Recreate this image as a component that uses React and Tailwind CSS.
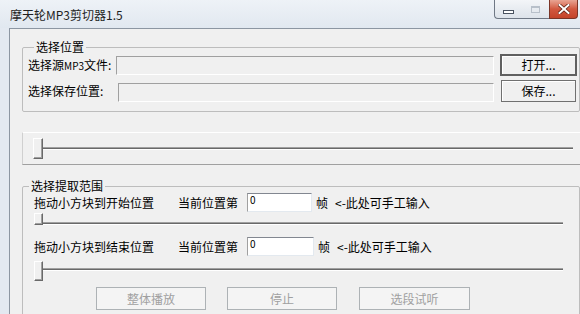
import React from 'react';

const Thumb = ({ className }) => (
    <div className={className}>
        <div className="w-full h-full border border-t-white border-l-white border-r-[#696969] border-b-[#696969] bg-[#f0f0f0] shadow-[inset_-1px_-1px_0_#a0a0a0]" />
    </div>
);

const Track = ({ className }) => (
    <div className={className}>
        <div className="h-[3px] border-t border-t-[#a0a0a0] bg-[#696969] border-b border-b-white" />
    </div>
);

const SunkenField = ({ className }) => (
    <div className={className}>
        <div className="w-full h-full border border-t-[#a0a0a0] border-l-[#a0a0a0] border-r-white border-b-white bg-[#f0f0f0]" />
    </div>
);

const NumInput = ({ className }) => (
    <div className={className}>
        <div className="w-full h-full border border-t-[#828790] border-l-[#a0a0a0] border-r-[#e3e9ef] border-b-[#e3e9ef] bg-white pl-[2px] text-[10px] leading-[11px] text-black">0</div>
    </div>
);

const DisabledButton = ({ children, className }) => (
    <div className={className}>
        <div className="w-full h-full flex items-center justify-center border border-[#adb2b5] bg-[#f4f4f4] text-[#a0a0a0]">{children}</div>
    </div>
);

export default function App() {
    return (
        <div className="w-[580px] h-[314px] overflow-hidden bg-[#e3e9f1] flex flex-col text-[12px] leading-[14px] text-black font-['Noto_Sans_CJK_SC','Liberation_Sans',sans-serif]">
            {/* Title bar */}
            <div className="h-[28px] shrink-0 flex items-start bg-gradient-to-b from-[#eef2f7] to-[#e1e8f0]">
                <div className="pl-[10px] pt-[7px] text-[12px] leading-[16px] text-[#1e1e1e]">摩天轮MP3剪切器1.5</div>
                <div className="ml-auto mr-[2px] flex">
                    <div className="w-[28px] h-[19px] flex items-end justify-center pb-[4px] border border-t-0 border-r-0 border-[#6f7885] rounded-bl-[4px] bg-gradient-to-b from-[#f3f5f8] to-[#dde3ea]">
                        <div className="w-[11px] h-[4px] border border-[#4a5360] bg-white" />
                    </div>
                    <div className="w-[27px] h-[19px] flex items-center justify-center border-b border-[#6f7885] bg-gradient-to-b from-[#f3f5f8] to-[#dde3ea]">
                        <div className="w-[9px] h-[7px] border border-[#b8c0ca] border-t-2" />
                    </div>
                    <div className="w-[29px] h-[19px] flex items-center justify-center border border-t-0 border-[#7a3527] rounded-br-[4px] bg-gradient-to-b from-[#e8a493] via-[#d2583f] to-[#c4442a]">
                        <svg width="12" height="10" viewBox="0 0 12 10">
                            <path d="M1.5 1 L10.5 9 M10.5 1 L1.5 9" stroke="#5a1e12" strokeWidth="3.4" strokeLinecap="square" />
                            <path d="M1.5 1 L10.5 9 M10.5 1 L1.5 9" stroke="#ffffff" strokeWidth="2" strokeLinecap="square" />
                        </svg>
                    </div>
                </div>
            </div>

            {/* Frame + client */}
            <div className="flex-1 flex pl-[9px] min-h-0">
                <div className="flex-1 flex flex-col overflow-hidden border-l border-t border-[#8c96a2] bg-[#f0f0f0]">
                    {/* Group 1 */}
                    <fieldset className="shrink-0 mt-[11px] ml-[12px] border border-[#bdbdbd] rounded-[2px] pl-[5px] pr-[2px] pb-[9px]">
                        <legend className="ml-[6px] px-[2px] leading-[14px]">选择位置</legend>
                        <div className="flex items-center h-[22px]">
                            <div className="w-[88px]">选择源<span className="text-[10px]">MP3</span>文件:</div>
                            <SunkenField className="flex-1 h-[19px]" />
                            <div className="ml-[6px] w-[77px] h-[22px] flex items-center justify-center border-2 border-[#606060] bg-[#f0f0f0] shadow-[inset_1px_1px_0_#ffffff]">打开...</div>
                        </div>
                        <div className="flex items-center h-[22px] mt-[4px]">
                            <div className="w-[90px]">选择保存位置:</div>
                            <SunkenField className="flex-1 h-[19px] mt-[2px]" />
                            <div className="ml-[7px] mr-[1px] w-[75px] h-[22px] flex items-center justify-center border border-[#707070] bg-[#f0f0f0] shadow-[inset_1px_1px_0_#ffffff]">保存...</div>
                        </div>
                    </fieldset>

                    {/* Slider 1 */}
                    <div className="shrink-0 relative mt-[20px] ml-[12px] h-[33px] border-t border-l border-t-white border-l-[#d0d0d0] border-b border-b-[#a0a0a0]">
                        <Track className="pt-[14px] pl-[12px] pr-[7px]" />
                        <Thumb className="absolute left-[10px] top-[5px] w-[10px] h-[21px]" />
                    </div>

                    {/* Group 2 */}
                    <fieldset className="shrink-0 mt-[14px] ml-[12px] border border-[#bdbdbd] rounded-[2px] pb-[40px]">
                        <legend className="ml-[6px] px-[2px] leading-[14px]">选择提取范围</legend>
                        <div className="flex items-center h-[19px] pl-[11px]">
                            <div className="w-[144px]">拖动小方块到开始位置</div>
                            <div className="w-[69px]">当前位置第</div>
                            <NumInput className="w-[65px] h-[19px]" />
                            <div className="ml-[4px]">帧</div>
                            <div className="ml-[7px]">&lt;-此处可手工输入</div>
                        </div>
                        <div className="relative h-[25px]">
                            <Track className="pt-[10px] pl-[18px] pr-[16px]" />
                            <Thumb className="absolute left-[11px] top-[1px] w-[9px] h-[12px]" />
                        </div>
                        <div className="flex items-center h-[19px] pl-[11px]">
                            <div className="w-[144px]">拖动小方块到结束位置</div>
                            <div className="w-[69px]">当前位置第</div>
                            <NumInput className="w-[67px] h-[19px]" />
                            <div className="ml-[4px]">帧</div>
                            <div className="ml-[7px]">&lt;-此处可手工输入</div>
                        </div>
                        <div className="relative h-[31px]">
                            <Track className="pt-[12px] pl-[18px] pr-[16px]" />
                            <Thumb className="absolute left-[11px] top-[5px] w-[9px] h-[20px]" />
                        </div>
                        <div className="flex h-[23px]">
                            <DisabledButton className="ml-[73px] w-[110px] h-[23px]">整体播放</DisabledButton>
                            <DisabledButton className="ml-[21px] w-[110px] h-[23px]">停止</DisabledButton>
                            <DisabledButton className="ml-[22px] w-[111px] h-[23px]">选段试听</DisabledButton>
                        </div>
                    </fieldset>
                </div>
            </div>
        </div>
    );
}
